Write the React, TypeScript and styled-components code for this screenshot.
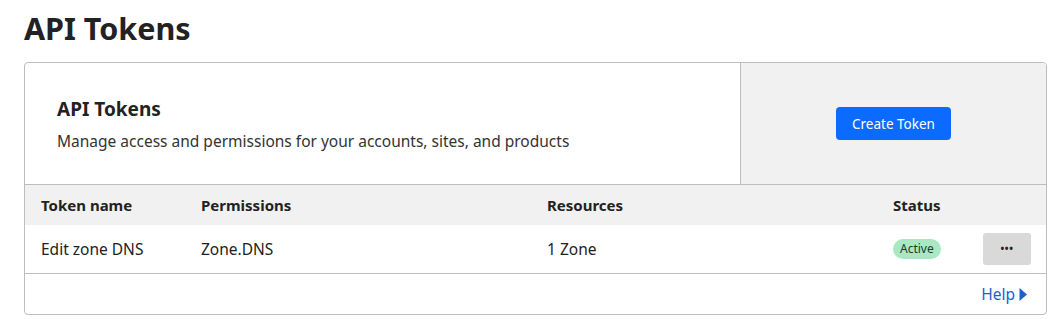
import styled, { createGlobalStyle } from 'styled-components';

const Global = createGlobalStyle`
  body {
    margin: 0;
    background: #fff;
    font-family: "Noto Sans", "Noto Sans CJK KR", sans-serif;
    color: #222;
  }
`;

const Page = styled.main`
  padding: 6px 16px 0 24px;
`;

const Title = styled.h1`
  margin: 0 0 12px;
  font-size: 30.5px;
  line-height: 44px;
  font-weight: 700;
  color: #222;
`;

const Card = styled.section`
  border: 1px solid #bdbdbd;
  border-radius: 4px;
  overflow: hidden;
`;

const Intro = styled.div`
  display: grid;
  grid-template-columns: 1fr 306px;
  height: 121px;
  border-bottom: 1px solid #bdbdbd;
`;

const IntroText = styled.div`
  padding: 0 32px;
  display: flex;
  flex-direction: column;
  justify-content: center;
  gap: 8px;
`;

const Subtitle = styled.h2`
  margin: 0;
  font-size: 19px;
  line-height: 26px;
  font-weight: 700;
`;

const Description = styled.p`
  margin: 0;
  font-size: 15.5px;
  line-height: 22px;
  color: #333;
`;

const ActionPanel = styled.div`
  background: #f1f1f1;
  border-left: 1px solid #bdbdbd;
  display: flex;
  align-items: center;
  justify-content: center;
`;

const PrimaryButton = styled.button`
  height: 33px;
  padding: 0 16px;
  border: 0;
  border-radius: 4px;
  background: #0b6bff;
  color: #fff;
  font: inherit;
  font-size: 13.5px;
`;

const Row = styled.div<{ $head?: boolean }>`
  display: grid;
  grid-template-columns: 160px 346px 346px 90px 48px;
  align-items: center;
  padding: 0 16px;
  height: ${({ $head }) => ($head ? '40px' : '48px')};
  background: ${({ $head }) => ($head ? '#f1f1f1' : '#fff')};
  font-size: ${({ $head }) => ($head ? '15px' : '15.5px')};
  font-weight: ${({ $head }) => ($head ? 700 : 400)};
  border-bottom: ${({ $head }) => ($head ? 'none' : '1px solid #bdbdbd')};
`;

const Badge = styled.span`
  justify-self: start;
  padding: 0 7px;
  height: 20px;
  line-height: 20px;
  border-radius: 10px;
  background: #a9e8c2;
  font-size: 12px;
  color: #1e3a2a;
`;

const MoreButton = styled.button`
  width: 48px;
  height: 32px;
  border: 0;
  border-radius: 3px;
  background: #d9d9d9;
  color: #222;
  font: inherit;
  font-size: 10px;
  font-weight: 700;
  letter-spacing: 0.5px;
  padding: 0 0 2px;
`;

const Footer = styled.div`
  height: 40px;
  display: flex;
  align-items: center;
  justify-content: flex-end;
  padding: 0 19px;
`;

const HelpLink = styled.a`
  display: flex;
  align-items: center;
  gap: 4px;
  color: #1b5fd0;
  font-size: 15.5px;
  text-decoration: none;
`;

export default function App() {
  return (
    <>
      <Global />
      <Page>
        <Title>API Tokens</Title>
        <Card>
          <Intro>
            <IntroText>
              <Subtitle>API Tokens</Subtitle>
              <Description>Manage access and permissions for your accounts, sites, and products</Description>
            </IntroText>
            <ActionPanel>
              <PrimaryButton>Create Token</PrimaryButton>
            </ActionPanel>
          </Intro>
          <Row $head>
            <span>Token name</span>
            <span>Permissions</span>
            <span>Resources</span>
            <span>Status</span>
            <span />
          </Row>
          <Row>
            <span>Edit zone DNS</span>
            <span>Zone.DNS</span>
            <span>1 Zone</span>
            <Badge>Active</Badge>
            <MoreButton>•••</MoreButton>
          </Row>
          <Footer>
            <HelpLink href="#">
              Help
              <svg width="8" height="13" viewBox="0 0 8 13">
                <path d="M0.5 0 L8 6.5 L0.5 13 Z" fill="#1b5fd0" />
              </svg>
            </HelpLink>
          </Footer>
        </Card>
      </Page>
    </>
  );
}
